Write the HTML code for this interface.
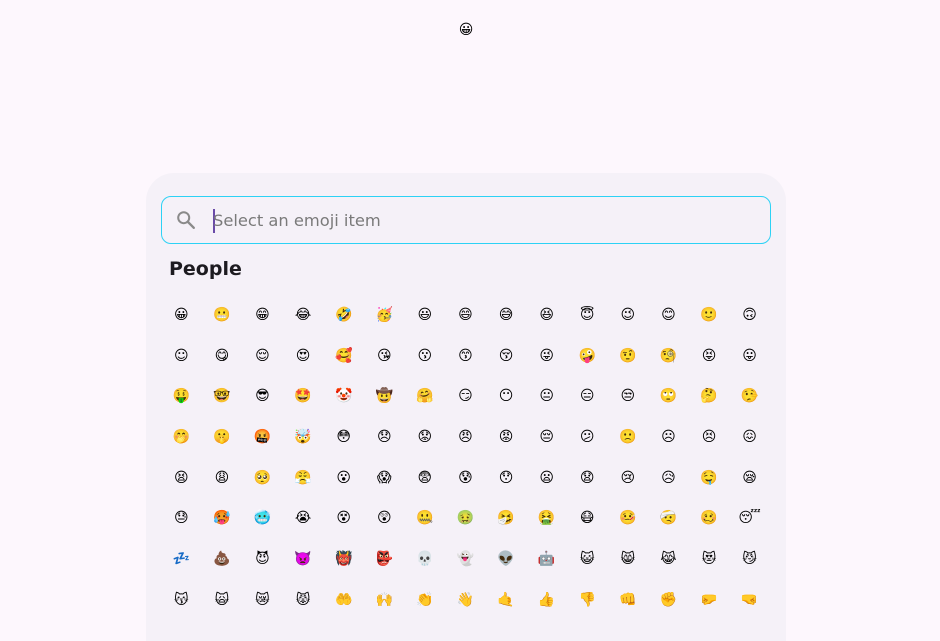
<!DOCTYPE html>
<html><head><meta charset="utf-8"><style>
html,body{margin:0;width:940px;height:641px;overflow:hidden}
body{background:#fdf7fd;font-family:"DejaVu Sans","Liberation Sans",sans-serif;position:relative}
.top{position:absolute;left:456px;width:20px;top:20px;text-align:center;font-size:14px;line-height:20px}
.card{position:absolute;left:146px;top:173px;width:640px;height:468px;background:#f5f1f8;border-radius:28px 28px 0 0;overflow:hidden}
.search{position:absolute;left:15px;top:23px;width:608px;height:46px;border:1px solid #2dd2f5;border-radius:10px}
.search svg{position:absolute;left:13px;top:12px}
.caret{position:absolute;left:51px;top:12px;width:2px;height:24px;background:#6a4aa8}
.ph{position:absolute;left:51px;top:12px;font-size:16.3px;line-height:24px;color:#7a7a7a}
.h{position:absolute;left:23px;top:84px;font-size:19px;font-weight:bold;color:#1d1b20;line-height:24px}
.grid{position:absolute;left:15px;top:122px;display:grid;grid-template-columns:repeat(15,40.6px);grid-auto-rows:40.7px}
.grid span{text-align:center;font-size:14px;line-height:40px}
</style></head><body>
<div class="top">😀</div>
<div class="card">
<div class="search"><svg width="22" height="22" viewBox="0 0 24 24"><circle cx="9.5" cy="9.5" r="6" fill="none" stroke="#8a8a8a" stroke-width="2.2"/><path d="M14 14l6.5 6.5" stroke="#8a8a8a" stroke-width="2.6" stroke-linecap="round"/></svg><div class="caret"></div><div class="ph">Select an emoji item</div></div>
<div class="h">People</div>
<div class="grid">
<span>😀</span><span>😬</span><span>😁</span><span>😂</span><span>🤣</span><span>🥳</span><span>😃</span><span>😄</span><span>😅</span><span>😆</span><span>😇</span><span>😉</span><span>😊</span><span>🙂</span><span>🙃</span>
<span>☺</span><span>😋</span><span>😌</span><span>😍</span><span>🥰</span><span>😘</span><span>😗</span><span>😙</span><span>😚</span><span>😜</span><span>🤪</span><span>🤨</span><span>🧐</span><span>😝</span><span>😛</span>
<span>🤑</span><span>🤓</span><span>😎</span><span>🤩</span><span>🤡</span><span>🤠</span><span>🤗</span><span>😏</span><span>😶</span><span>😐</span><span>😑</span><span>😒</span><span>🙄</span><span>🤔</span><span>🤥</span>
<span>🤭</span><span>🤫</span><span>🤬</span><span>🤯</span><span>😳</span><span>😞</span><span>😟</span><span>😠</span><span>😡</span><span>😔</span><span>😕</span><span>🙁</span><span>☹</span><span>😣</span><span>😖</span>
<span>😫</span><span>😩</span><span>🥺</span><span>😤</span><span>😮</span><span>😱</span><span>😨</span><span>😰</span><span>😯</span><span>😦</span><span>😧</span><span>😢</span><span>😥</span><span>🤤</span><span>😪</span>
<span>😓</span><span>🥵</span><span>🥶</span><span>😭</span><span>😵</span><span>😲</span><span>🤐</span><span>🤢</span><span>🤧</span><span>🤮</span><span>😷</span><span>🤒</span><span>🤕</span><span>🥴</span><span>😴</span>
<span>💤</span><span>💩</span><span>😈</span><span>👿</span><span>👹</span><span>👺</span><span>💀</span><span>👻</span><span>👽</span><span>🤖</span><span>😺</span><span>😸</span><span>😹</span><span>😻</span><span>😼</span>
<span>😽</span><span>🙀</span><span>😿</span><span>😾</span><span>🤲</span><span>🙌</span><span>👏</span><span>👋</span><span>🤙</span><span>👍</span><span>👎</span><span>👊</span><span>✊</span><span>🤛</span><span>🤜</span>
</div>
</div>
</body></html>
